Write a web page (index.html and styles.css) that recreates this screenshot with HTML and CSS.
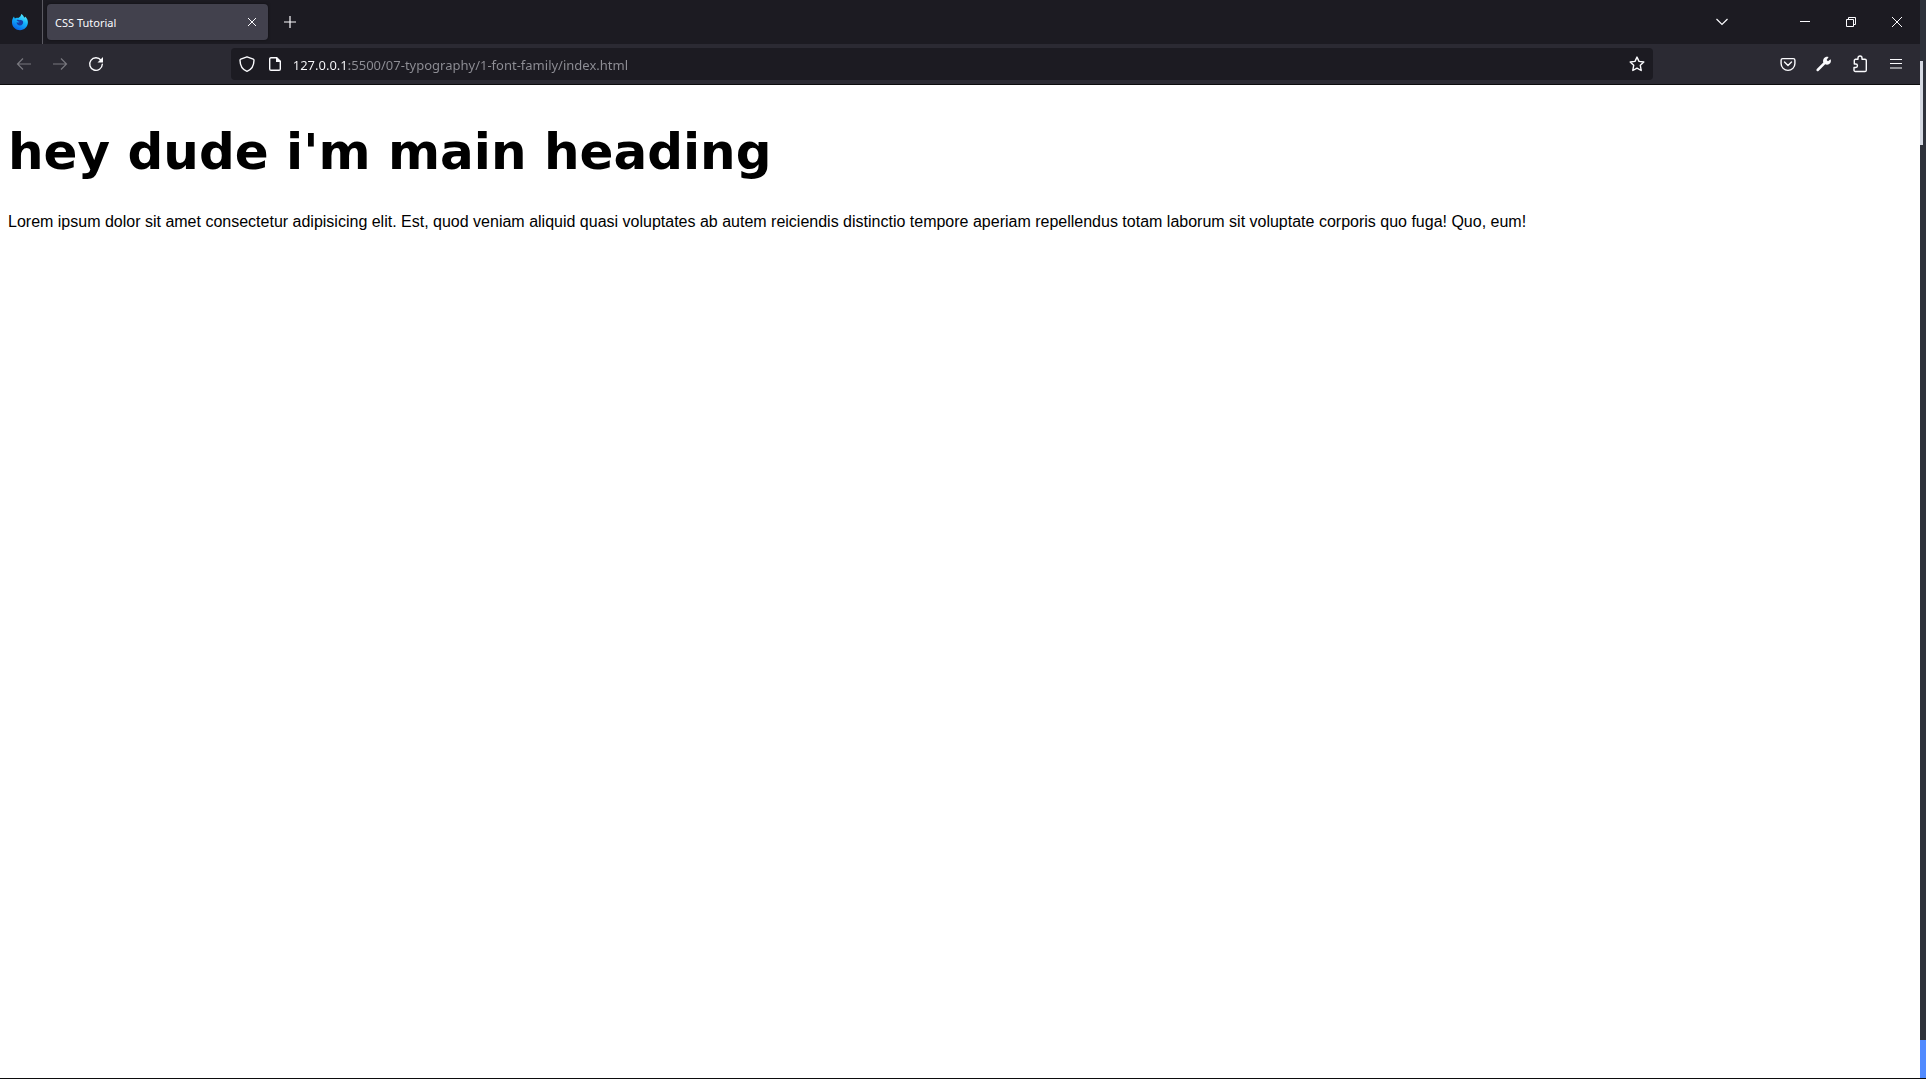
FILE: index.html
```html
<!DOCTYPE html>
<html lang="en">
<head>
<meta charset="utf-8">
<title>CSS Tutorial</title>
<link rel="stylesheet" href="styles.css">
</head>
<body>
<div class="browser">
  <header class="tabbar">
    <button class="pinned" aria-label="Firefox View">
      <svg width="18" height="18" viewBox="0 0 18 18">
        <defs><linearGradient id="flame" x1="0.8" y1="0" x2="0.3" y2="1"><stop offset="0" stop-color="#5ff0ff"/><stop offset="0.45" stop-color="#14b4fb"/><stop offset="1" stop-color="#0560e8"/></linearGradient></defs>
        <path fill="url(#flame)" d="M10.200 1c1.900 1 2.600 2.200 2.800 3.600 .8-.1 1.100-.6 1.200-1.200 2 1.700 2.900 4 2.700 6.400C16.600 14.200 13.200 17.200 9 17.200S1.200 14 1 9.700C.9 7.300 1.600 5.100 3 3.600c.1.900.4 1.400.9 1.800 1-.7 2.200-.8 3.200-.4C8.800 4.300 10.100 2.900 10.200 1z"/>
        <path fill="#183da8" d="M5.500 7.200c1.200-.8 2.400-.5 3.500.1 1.200-.6 2.700.2 3.100 1.500.4 2-1.200 3.700-3.100 3.700-2 0-3.500-1.500-3.400-3.300 1 .6 2.300.6 3.200-.5-1.200 0-2.400-.6-3.300-1.500z"/>
      </svg>
    </button>
    <div class="tab">
      <span class="tab-title">CSS Tutorial</span>
      <button class="tab-close" aria-label="Close tab"><svg width="10" height="10" viewBox="0 0 10 10"><path class="thin" d="M1 1l8 8M9 1l-8 8"/></svg></button>
    </div>
    <button class="tool" aria-label="New tab"><svg width="12" height="12" viewBox="0 0 12 12"><path class="line" d="M6 0v12M0 6h12"/></svg></button>
    <div class="fill"></div>
    <button class="tool list-tabs" aria-label="List all tabs"><svg width="14" height="8" viewBox="0 0 14 8"><path class="line" d="M1.500 1L7 6.500 12.500 1"/></svg></button>
    <button class="win" aria-label="Minimise"><svg width="10" height="10" viewBox="0 0 10 10"><path class="thin" d="M0 4.500h10"/></svg></button>
    <button class="win" aria-label="Restore"><svg width="10" height="10" viewBox="0 0 10 10"><path class="thin" d="M.5 2.500h7v7h-7zM2.500 2.500v-2h7v7h-2"/></svg></button>
    <button class="win" aria-label="Close"><svg width="10" height="10" viewBox="0 0 10 10"><path class="thin" d="M0 0l10 10M10 0L0 10"/></svg></button>
  </header>
  <nav class="toolbar" aria-label="Navigation">
    <button class="tool" aria-label="Back" disabled><svg width="16" height="16" viewBox="0 0 16 16"><path class="line" d="M15 8H1.500M7 2.500L1.500 8 7 13.500"/></svg></button>
    <button class="tool" aria-label="Forward" disabled><svg width="16" height="16" viewBox="0 0 16 16"><path class="line" d="M1 8h13.500M9 2.500L14.500 8 9 13.500"/></svg></button>
    <button class="tool" aria-label="Reload"><svg width="16" height="16" viewBox="0 0 16 16"><path class="icon" d="M13 4.200A6.300 6.300 0 1 0 14.300 8.300"/><path fill="currentColor" d="M15 1v5.500H9.500z"/></svg></button>
    <div class="spring"></div>
    <div class="address">
      <button class="site" aria-label="Tracking protection"><svg width="16" height="16" viewBox="0 0 16 16"><path class="icon" d="M8 .8L14.300 3.200c.5.200.7.500.7 1C14.900 9.500 12.300 13.700 8 15.300 3.700 13.700 1.100 9.500 1 4.200c0-.5.2-.8.700-1z"/></svg></button>
      <button class="site" aria-label="Site information"><svg width="16" height="16" viewBox="0 0 16 16"><path class="icon" d="M9.500 1.700H4A1.300 1.300 0 0 0 2.700 3v10A1.300 1.300 0 0 0 4 14.300h8a1.300 1.300 0 0 0 1.300-1.300V5.500"/><path fill="currentColor" d="M9 1h1l4 4v1H9z"/></svg></button>
      <input class="url" type="text" aria-label="Address" value="127.0.0.1:5500/07-typography/1-font-family/index.html">
      <button class="site star" aria-label="Bookmark this page"><svg width="16" height="16" viewBox="0 0 16 16"><path class="icon" d="M8 1.100l2 4.300 4.800.6-3.500 3.300.9 5.200L8 12.100l-4.200 2.400.9-5.200L1.200 6 6 5.400z"/></svg></button>
    </div>
    <div class="spring"></div>
    <button class="tool" aria-label="Save to Pocket"><svg width="16" height="16" viewBox="0 0 16 16"><path class="icon" d="M2.700 2.600h10.600a1.600 1.600 0 0 1 1.600 1.600V7.500a6.900 6.900 0 0 1-13.800 0V4.200a1.600 1.600 0 0 1 1.600-1.600z"/><path class="icon" d="M4.500 6L8 9.500 11.500 6"/></svg></button>
    <button class="tool" aria-label="Developer tools"><svg width="16" height="16" viewBox="0 0 16 16"><path fill="currentColor" d="M14.600 3.200L12 5.300 10.600 4l2-2.900C11 .5 8.800 1 7.800 2.600 7 3.900 6.900 5.300 7.300 6.500L.8 13.100c-.5.500-.5 1.300 0 1.800s1.200.5 1.700 0L9.200 8.300c1.300.6 3 .5 4.300-.5 1.400-1.100 1.800-3 1.100-4.600z"/></svg></button>
    <button class="tool" aria-label="Extensions"><svg width="16" height="18" viewBox="0 0 16 18"><path class="icon" d="M2.300 7.300V5.500A1.200 1.200 0 0 1 3.500 4.300H6V3a2 2 0 0 1 4 0v1.300h3A1.300 1.300 0 0 1 14.300 5.600v9.700A1.300 1.300 0 0 1 13 16.500H3.300A1.300 1.300 0 0 1 2 15.200V12.500h1.700a1.700 1.700 0 0 0 0-3.500H2.300z"/></svg></button>
    <button class="tool" aria-label="Menu"><svg width="12" height="12" viewBox="0 0 12 12"><path class="line" d="M0 1.500h12M0 5.500h12M0 10h12"/></svg></button>
  </nav>
  <main class="page">
    <h1>hey dude i'm main heading</h1>
    <p>Lorem ipsum dolor sit amet consectetur adipisicing elit. Est, quod veniam aliquid quasi voluptates ab autem reiciendis distinctio tempore aperiam repellendus totam laborum sit voluptate corporis quo fuga! Quo, eum!</p>
  </main>
</div>
<div class="edge"><div class="thumb"></div><div class="accent"></div></div>
</body>
</html>
```

FILE: styles.css
```css
* { box-sizing: border-box; }
body {
  margin: 0;
  min-height: 100vh;
  display: flex;
  background: #fff;
  border-bottom: 1px solid #0c0c0d;
}
button {
  border: 0;
  padding: 0;
  background: none;
  color: #fbfbfe;
  display: flex;
  align-items: center;
  justify-content: center;
  flex: none;
}
svg { display: block; fill: none; }
.line { stroke: currentColor; stroke-width: 1.2; }
.thin { stroke: currentColor; stroke-width: 1; }
.icon { stroke: currentColor; stroke-width: 1.4; stroke-linejoin: round; stroke-linecap: round; }

.browser { flex: 1; min-width: 0; display: flex; flex-direction: column; }
.tabbar { display: flex; align-items: center; height: 44px; background: #1c1b22; }
.pinned { width: 43px; height: 44px; border-right: 1px solid #5b5a62; padding-right: 2px; }
.tab {
  display: flex;
  align-items: center;
  justify-content: space-between;
  width: 221px;
  height: 36px;
  margin: 0 4px;
  padding: 0 4px 0 8px;
  border-radius: 4px;
  background: #42414d;
  box-shadow: 0 0 3px rgba(0, 0, 0, .5);
}
.tab-title { padding-top: 2px; font: 11px/20px "Noto Sans", sans-serif; color: #fbfbfe; }
.tab-close { width: 24px; height: 24px; }
.fill { flex: 1; }
.tool { width: 36px; height: 36px; }
.tool:disabled { color: #78777e; }
.list-tabs { margin-right: 42px; }
.win { width: 46px; height: 44px; }

.toolbar {
  display: flex;
  align-items: center;
  height: 41px;
  padding: 0 6px;
  background: #2b2a33;
  border-bottom: 1px solid #0c0c0d;
}
.spring { flex: 117; }
.address {
  flex: 1422;
  min-width: 0;
  display: flex;
  align-items: center;
  height: 32px;
  padding: 0 2px;
  border-radius: 4px;
  background: #1c1b22;
}
.site { width: 28px; height: 28px; }
.url {
  flex: 1;
  min-width: 0;
  height: 28px;
  border: 0;
  padding: 2px 0 0 4px;
  outline: 0;
  font: 13px/20px "Noto Sans", sans-serif;
  color: transparent;
  background: linear-gradient(to right, #fbfbfe 60px, #8f8f96 60px);
  background-clip: text;
}

.page { flex: 1; padding: 0 8px; background: #fff; color: #000; font: 16px/20px "Liberation Sans", Arial, sans-serif; }
.page h1 { margin: 35px 0 28px; font: bold 50px/64px Verdana, "DejaVu Sans", sans-serif; }
.page p { margin: 0; }

.edge { width: 6px; flex: none; display: flex; flex-direction: column; justify-content: space-between; background: #2e323b; }
.thumb { width: 3px; height: 84px; margin-top: 61px; background: #d5d9e2; }
.accent { height: 38px; background: #528bff; }
```
